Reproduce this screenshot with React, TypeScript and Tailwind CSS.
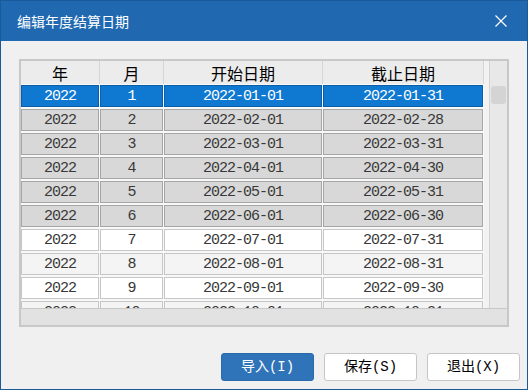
import React from "react";

type Row = { y: string; m: number; s: string; e: string };

const rows: Row[] = [
  { y: "2022", m: 1, s: "2022-01-01", e: "2022-01-31" },
  { y: "2022", m: 2, s: "2022-02-01", e: "2022-02-28" },
  { y: "2022", m: 3, s: "2022-03-01", e: "2022-03-31" },
  { y: "2022", m: 4, s: "2022-04-01", e: "2022-04-30" },
  { y: "2022", m: 5, s: "2022-05-01", e: "2022-05-31" },
  { y: "2022", m: 6, s: "2022-06-01", e: "2022-06-30" },
  { y: "2022", m: 7, s: "2022-07-01", e: "2022-07-31" },
  { y: "2022", m: 8, s: "2022-08-01", e: "2022-08-31" },
  { y: "2022", m: 9, s: "2022-09-01", e: "2022-09-30" },
  { y: "2022", m: 10, s: "2022-10-01", e: "2022-10-31" },
];

const widths = ["w-[79px]", "w-[64px]", "w-[159px]", "w-[161px]"];

function cellClass(m: number) {
  if (m === 1) return "bg-[#0f79d2] border-[#0b5ea6] text-white";
  if (m <= 6) return "bg-[#d8d8d8] border-[#a6a6a6] text-[#383838]";
  if (m % 2 === 0) return "bg-[#f4f4f4] border-[#c6c6c6] text-[#383838]";
  return "bg-white border-[#c6c6c6] text-[#383838]";
}

export default function App() {
  return (
    <div className="w-[528px] h-[390px] border border-[#1a5a98] bg-[#f0f0f0] flex flex-col overflow-hidden font-['Noto_Sans_CJK_SC',sans-serif]">
      <div className="h-[40px] shrink-0 bg-[#2069b1] flex items-center justify-between pl-4 pr-[20px]">
        <span className="text-white text-[14px] leading-none">编辑年度结算日期</span>
        <svg width="12" height="12" viewBox="0 0 12 12" className="block">
          <path d="M0.5 0.5 L11.5 11.5 M11.5 0.5 L0.5 11.5" stroke="white" strokeWidth="1.2" fill="none" />
        </svg>
      </div>

      <div className="pl-[18px] pt-[18px]">
        <div className="w-[490px] h-[268px] border-2 border-[#c8c8c8] flex flex-col bg-[#f4f4f4]">
          <div className="flex h-[247px]">
            <div className="w-[468px] flex flex-col overflow-hidden bg-[#f8f8f8]">
              <div className="h-[23px] shrink-0 flex bg-[#ececec] text-black text-[16px]">
                {["年", "月", "开始日期", "截止日期"].map((h, i) => (
                  <div key={h} className={`${widths[i]} shrink-0 border-r border-[#d6d6d6] flex items-center justify-center leading-none`}>
                    {h}
                  </div>
                ))}
                <div className="flex-1 bg-[#f2f2f2]" />
              </div>
              {rows.map((r) => (
                <div key={r.m} className="h-[24px] shrink-0 flex">
                  {[r.y, String(r.m), r.s, r.e].map((v, i) => (
                    <div key={i} className={`${widths[i]} shrink-0 pr-[1px] pt-[1px]`}>
                      <div
                        className={`h-[22px] border ${cellClass(r.m)} flex items-center justify-center font-['Liberation_Mono',monospace] text-[15px] tracking-[-1px] leading-none`}
                      >
                        {v}
                      </div>
                    </div>
                  ))}
                  <div className="flex-1 bg-[#f2f2f2]" />
                </div>
              ))}
            </div>
            <div className="w-[18px] border-l border-[#d2d2d2] bg-[#e8e8e8] pt-[25px] pl-[1px]">
              <div className="w-[15px] h-[18px] rounded-[3px] bg-[#d4d4d4]" />
            </div>
          </div>
          <div className="h-[17px] border-t border-[#c8c8c8] bg-[#e2e2e2]" />
        </div>
      </div>

      <div className="mt-auto flex justify-end gap-[10px] pr-[7px] pb-[8px] font-['Liberation_Mono','Noto_Sans_CJK_SC',monospace] text-[14px]">
        <button className="w-[93px] h-[28px] rounded-[3px] bg-[#2f73b8] border border-[#2b6aaa] text-white flex items-center justify-center leading-none">
          导入(I)
        </button>
        <button className="w-[93px] h-[28px] rounded-[3px] bg-white border border-[#c6c6c6] text-black flex items-center justify-center leading-none">
          保存(S)
        </button>
        <button className="w-[93px] h-[28px] rounded-[3px] bg-white border border-[#c6c6c6] text-black flex items-center justify-center leading-none">
          退出(X)
        </button>
      </div>
    </div>
  );
}
